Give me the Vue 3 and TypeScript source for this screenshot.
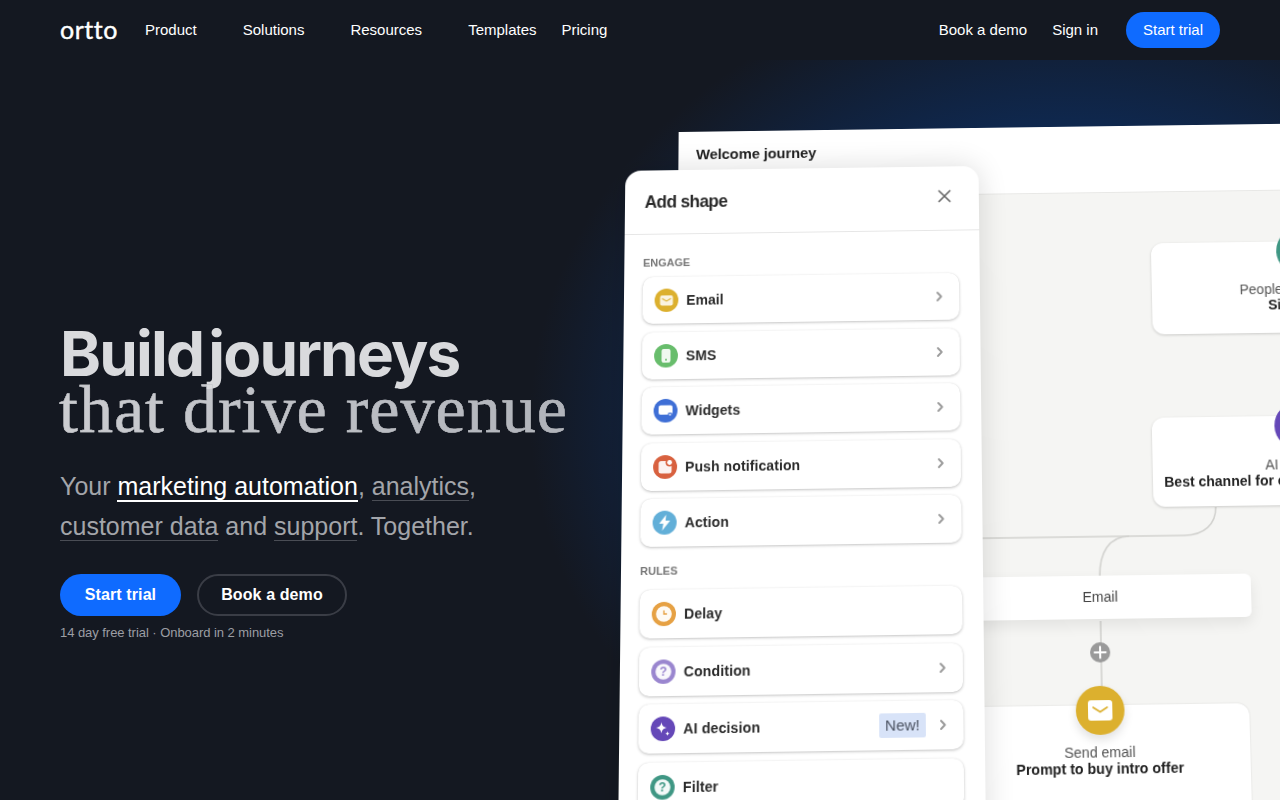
<script setup lang="ts">
type Row = { label: string; kind: string; color: string; chevron?: boolean; badge?: string }

const navLeft = [
  { label: 'Product', menu: true },
  { label: 'Solutions', menu: true },
  { label: 'Resources', menu: true },
  { label: 'Templates', menu: false },
  { label: 'Pricing', menu: false },
]

const engage: Row[] = [
  { label: 'Email', kind: 'email', color: '#dcb02e', chevron: true },
  { label: 'SMS', kind: 'sms', color: '#68bd6c', chevron: true },
  { label: 'Widgets', kind: 'widget', color: '#3f6fd6', chevron: true },
  { label: 'Push notification', kind: 'push', color: '#d8613f', chevron: true },
  { label: 'Action', kind: 'action', color: '#62afd8', chevron: true },
]

const rules: Row[] = [
  { label: 'Delay', kind: 'delay', color: '#e6a144' },
  { label: 'Condition', kind: 'question', color: '#9a86cf', chevron: true },
  { label: 'AI decision', kind: 'ai', color: '#6548b8', chevron: true, badge: 'New!' },
  { label: 'Filter', kind: 'question', color: '#3f9784' },
]

const groups = [
  { title: 'ENGAGE', rows: engage },
  { title: 'RULES', rows: rules },
]
</script>

<template>
  <div class="page">
    <header class="nav">
      <span class="logo">ortto</span>
      <nav class="nav-links">
        <a v-for="item in navLeft" :key="item.label" :class="{ menu: item.menu }">{{ item.label }}</a>
      </nav>
      <div class="nav-right">
        <a>Book a demo</a>
        <a>Sign in</a>
        <a class="nav-cta">Start trial</a>
      </div>
    </header>

    <section class="hero">
      <h1>
        <span class="h-bold">Build journeys</span>
        <span class="h-serif">that drive revenue</span>
      </h1>
      <p class="tagline">
        Your <span class="on">marketing automation</span>, <span class="off">analytics</span>,<br />
        <span class="off">customer data</span> and <span class="off">support</span>. Together.
      </p>
      <div class="actions">
        <a class="btn primary">Start trial</a>
        <a class="btn ghost">Book a demo</a>
      </div>
      <p class="note">14 day free trial · Onboard in 2 minutes</p>
    </section>

    <div class="scene">
      <div class="window">
        <div class="window-head">Welcome journey</div>
        <div class="canvas">
          <svg class="lines" width="700" height="700" viewBox="0 0 700 700" fill="none">
            <path d="M539 326 C539 343 527 354 507 354 L0 354" />
            <path d="M452 354 C432 354 422 370 422 394" />
            <path d="M422 438 L422 510" />
          </svg>
          <div class="node tall first">
            <i class="dot teal"></i>
            <span class="n-top">People who entered</span>
            <b>Signed up</b>
          </div>
          <div class="node tall second">
            <i class="dot violet"></i>
            <span class="n-top">AI decision</span>
            <b>Best channel for each of your customers</b>
          </div>
          <div class="node branch">Email</div>
          <div class="plus">
            <svg width="20" height="20" viewBox="0 0 20 20"><path d="M10 4.5v11M4.5 10h11" stroke="#fff" stroke-width="2" stroke-linecap="round" /></svg>
          </div>
          <div class="node send">
            <span class="n-top">Send email</span>
            <b>Prompt to buy intro offer</b>
          </div>
          <div class="mail">
            <svg width="26" height="22" viewBox="0 0 26 22">
              <rect x="1" y="1" width="24" height="20" rx="3" fill="#fff" />
              <path d="M6 8l7 4.5L20 8" fill="none" stroke="#dcb02e" stroke-width="1.6" stroke-linecap="round" />
            </svg>
          </div>
        </div>
      </div>

      <aside class="panel">
        <div class="panel-head">
          <span>Add shape</span>
          <svg class="close" width="14" height="14" viewBox="0 0 14 14"><path d="M1.5 1.5l11 11M12.5 1.5l-11 11" stroke="#666" stroke-width="1.7" stroke-linecap="round" /></svg>
        </div>
        <div v-for="group in groups" :key="group.title" class="group">
          <div class="group-title">{{ group.title }}</div>
          <div v-for="row in group.rows" :key="row.label" class="row">
            <svg class="ico" width="24" height="24" viewBox="0 0 24 24">
              <circle cx="12" cy="12" r="12" :fill="row.color" />
              <template v-if="row.kind === 'email'">
                <rect x="5.5" y="7" width="13" height="10.5" rx="2" fill="#fff" opacity=".85" />
                <path d="M8 10.5l4 2.4 4-2.4" fill="none" :stroke="row.color" stroke-width="1.2" stroke-linecap="round" />
              </template>
              <template v-else-if="row.kind === 'sms'">
                <rect x="7.5" y="5" width="9" height="14" rx="2" fill="#fff" opacity=".9" />
                <circle cx="12" cy="16" r="1" :fill="row.color" />
              </template>
              <template v-else-if="row.kind === 'widget'">
                <rect x="5" y="6.5" width="14" height="9.5" rx="2" fill="#fff" />
                <rect x="14.5" y="14" width="4" height="3.5" rx="1" :fill="row.color" />
                <circle cx="16.5" cy="16" r="1" fill="#fff" />
              </template>
              <template v-else-if="row.kind === 'push'">
                <rect x="5.5" y="6" width="13" height="12.5" rx="2.5" fill="#fff" opacity=".92" />
                <circle cx="16.5" cy="7.5" r="4" :fill="row.color" />
                <circle cx="16.5" cy="7.5" r="2.4" fill="#fff" />
              </template>
              <template v-else-if="row.kind === 'action'">
                <path d="M13.5 4L6.5 13h4.2l-1.2 7 8-10h-4.6z" fill="#fff" />
              </template>
              <template v-else-if="row.kind === 'delay'">
                <circle cx="12" cy="12" r="7.8" fill="#fff" opacity=".94" />
                <path d="M12 8.8V12h2.6" fill="none" :stroke="row.color" stroke-width="1.3" stroke-linecap="round" />
              </template>
              <template v-else-if="row.kind === 'question'">
                <circle cx="12" cy="12" r="7.8" fill="#fff" opacity=".94" />
                <text x="12" y="16" text-anchor="middle" class="q" :fill="row.color">?</text>
              </template>
              <template v-else-if="row.kind === 'ai'">
                <path d="M10.5 5.5c.7 3.6 1.9 4.8 5.5 5.5-3.6.7-4.8 1.9-5.5 5.5-.7-3.6-1.9-4.8-5.5-5.5 3.6-.7 4.8-1.9 5.5-5.5z" fill="#fff" />
                <path d="M16.5 14.5c.3 1.5.8 2 2.3 2.3-1.5.3-2 .8-2.3 2.3-.3-1.5-.8-2-2.3-2.3 1.5-.3 2-.8 2.3-2.3z" fill="#fff" />
              </template>
            </svg>
            <span class="row-label">{{ row.label }}</span>
            <span v-if="row.badge" class="badge">{{ row.badge }}</span>
            <svg v-if="row.chevron" class="chev" width="8" height="12" viewBox="0 0 8 12"><path d="M2 2l3.8 4L2 10" fill="none" stroke="#9a9a9a" stroke-width="1.9" stroke-linecap="round" stroke-linejoin="round" /></svg>
          </div>
        </div>
      </aside>
    </div>
  </div>
</template>

<style>
html,
body {
  margin: 0;
  overflow: hidden;
  background: #141821;
}
</style>

<style scoped>
.page {
  position: relative;
  width: 1280px;
  height: 800px;
  overflow: hidden;
  font-family: "Liberation Sans", Arial, sans-serif;
  color: #fff;
  background:
    radial-gradient(ellipse 540px 450px at 1070px 420px, #0e2d5e 0%, #0e2a55 60%, rgba(20, 24, 33, 0) 100%),
    #141821;
}

.nav {
  position: relative;
  z-index: 2;
  display: flex;
  align-items: center;
  height: 60px;
  padding: 0 60px 2px;
  box-sizing: border-box;
  background: #141821;
  font-size: 15px;
}

.logo {
  width: 85px;
  font-family: "Lato", sans-serif;
  font-size: 25px;
  letter-spacing: 0.5px;
  -webkit-text-stroke: 0.4px #fff;
}

.nav-links {
  display: flex;
  gap: 25px;
}

.nav-links .menu {
  padding-right: 21px;
}

.nav-right {
  margin-left: auto;
  display: flex;
  align-items: center;
  gap: 25px;
}

.nav-cta {
  margin: 2px 0 0 3px;
  width: 94px;
  height: 36px;
  line-height: 35px;
  text-align: center;
  border-radius: 18px;
  background: #0f6bff;
}

.hero {
  padding: 264px 0 0 60px;
}

h1 {
  margin: 0;
  font-weight: 400;
}

.h-bold,
.h-serif {
  display: block;
  white-space: nowrap;
}

.h-bold {
  font-family: Inter, "Liberation Sans", sans-serif;
  font-size: 62px;
  font-weight: 700;
  line-height: 60px;
  letter-spacing: -1.8px;
  word-spacing: -8px;
  color: #d9dadd;
}

.h-serif {
  margin: -5px 0 0 -1px;
  font-family: "Liberation Serif", serif;
  font-size: 68px;
  line-height: 60px;
  letter-spacing: 1px;
  background: linear-gradient(90deg, #cbccd0 0, #b0b3ba 510px);
  -webkit-background-clip: text;
  background-clip: text;
  color: transparent;
  -webkit-text-stroke: 0.4px #bcbec3;
}

.tagline {
  margin: 27px 0 0;
  font-size: 25px;
  line-height: 40px;
  color: #a3a5aa;
}

.on {
  color: #fff;
  border-bottom: 2px solid #fff;
}

.off {
  border-bottom: 1px solid #4a4d55;
}

.actions {
  display: flex;
  gap: 16px;
  margin-top: 28px;
}

.btn {
  height: 42px;
  line-height: 42px;
  border-radius: 21px;
  font-size: 16px;
  font-weight: 700;
  text-align: center;
  box-sizing: border-box;
  letter-spacing: 0.1px;
}

.primary {
  width: 121px;
  background: #0f6bff;
}

.ghost {
  width: 150px;
  line-height: 38px;
  border: 2px solid #3a3d46;
}

.note {
  margin: 9px 0 0;
  font-size: 13px;
  line-height: 16px;
  letter-spacing: -0.05px;
  color: #9c9ea4;
}

/* tilted product shot, sits over the hero background */
.scene {
  position: absolute;
  inset: 0;
  transform-origin: 800px 480px;
  transform: perspective(2000px) rotateX(7deg) skewY(-0.8deg);
  filter: blur(0.35px);
}

.window {
  position: absolute;
  left: 676px;
  top: 120px;
  width: 800px;
  height: 900px;
  background: #fff;
  color: #222;
}

.window-head {
  height: 69px;
  padding: 15px 0 0 18px;
  box-sizing: border-box;
  font-size: 15px;
  font-weight: 700;
  letter-spacing: -0.1px;
}

.canvas {
  position: relative;
  height: 831px;
  background: #f5f5f3;
  border-top: 1px solid #e8e8e6;
}

.lines {
  position: absolute;
  left: 0;
  top: -3px;
}

.lines path {
  stroke: #d2d2cf;
  stroke-width: 1.6;
}

.node {
  position: absolute;
  left: 477px;
  width: 308px;
  background: #fff;
  border-radius: 12px;
  box-shadow: 0 1px 3px rgba(0, 0, 0, 0.18);
  box-sizing: border-box;
  text-align: center;
  font-size: 14px;
  color: #222;
}

.node b,
.n-top {
  display: block;
  line-height: 16px;
}

.n-top {
  color: #555;
}

.tall {
  padding-top: 41px;
}

.first {
  left: 480px;
  top: 53px;
  width: 302px;
  height: 94px;
}

.second {
  top: 232px;
  height: 90px;
  padding-right: 14px;
}

.dot {
  position: absolute;
  top: -14px;
  width: 48px;
  height: 48px;
  border-radius: 50%;
}

.teal {
  left: 127px;
  background: #3f9784;
}

.violet {
  left: 123px;
  background: #6548b8;
}

.branch {
  left: 272px;
  top: 390px;
  width: 300px;
  height: 43px;
  line-height: 43px;
  border-radius: 6px;
  box-shadow: 0 6px 14px rgba(0, 0, 0, 0.08);
  color: #444;
}

.plus {
  position: absolute;
  left: 411px;
  top: 456px;
  width: 20px;
  height: 20px;
  border-radius: 50%;
  background: #9a9a9a;
}

.plus svg {
  display: block;
}

.send {
  left: 271px;
  top: 518px;
  width: 296px;
  height: 200px;
  padding-top: 38px;
  box-shadow: 0 0 2px rgba(0, 0, 0, 0.14);
}

.mail {
  position: absolute;
  left: 396px;
  top: 499px;
  width: 48px;
  height: 48px;
  display: flex;
  align-items: center;
  justify-content: center;
  border-radius: 50%;
  background: #dcb02e;
  box-shadow: 0 5px 10px rgba(0, 0, 0, 0.12);
}

.panel {
  position: absolute;
  left: 622px;
  top: 160px;
  width: 360px;
  height: 700px;
  background: #fff;
  border-radius: 16px;
  box-shadow: 0 0 30px rgba(0, 0, 0, 0.14);
  color: #2a2a2a;
}

.panel-head {
  display: flex;
  align-items: center;
  justify-content: space-between;
  height: 66px;
  padding: 0 28px 0 20px;
  border-bottom: 1px solid #e6e6e6;
  font-size: 17.5px;
  font-weight: 700;
  letter-spacing: -0.6px;
}

.close {
  margin-top: -4px;
}

.group {
  padding: 0 21px 0 19px;
}

.group-title {
  margin: 22px 0 8px;
  font-size: 11px;
  line-height: 14px;
  font-weight: 700;
  color: #777;
}

.group + .group .group-title {
  margin: 17px 0 12px;
}

.row {
  display: flex;
  align-items: center;
  height: 48px;
  margin-bottom: 8.5px;
  padding: 0 16px 0 12px;
  background: #fff;
  border-radius: 10px;
  box-shadow: 0 1px 3px rgba(0, 0, 0, 0.24), 0 0 1px rgba(0, 0, 0, 0.08);
}

.ico {
  flex: none;
  margin-right: 8px;
}

.q {
  font-size: 12px;
  font-weight: 700;
}

.row-label {
  flex: 1;
  font-size: 14px;
  font-weight: 700;
  letter-spacing: 0.1px;
}

.badge {
  margin-right: 13px;
  padding: 0 6px;
  height: 24px;
  line-height: 24px;
  font-size: 15px;
  color: #4a5160;
  background: #d8e3f8;
  border-radius: 2px;
}
</style>
